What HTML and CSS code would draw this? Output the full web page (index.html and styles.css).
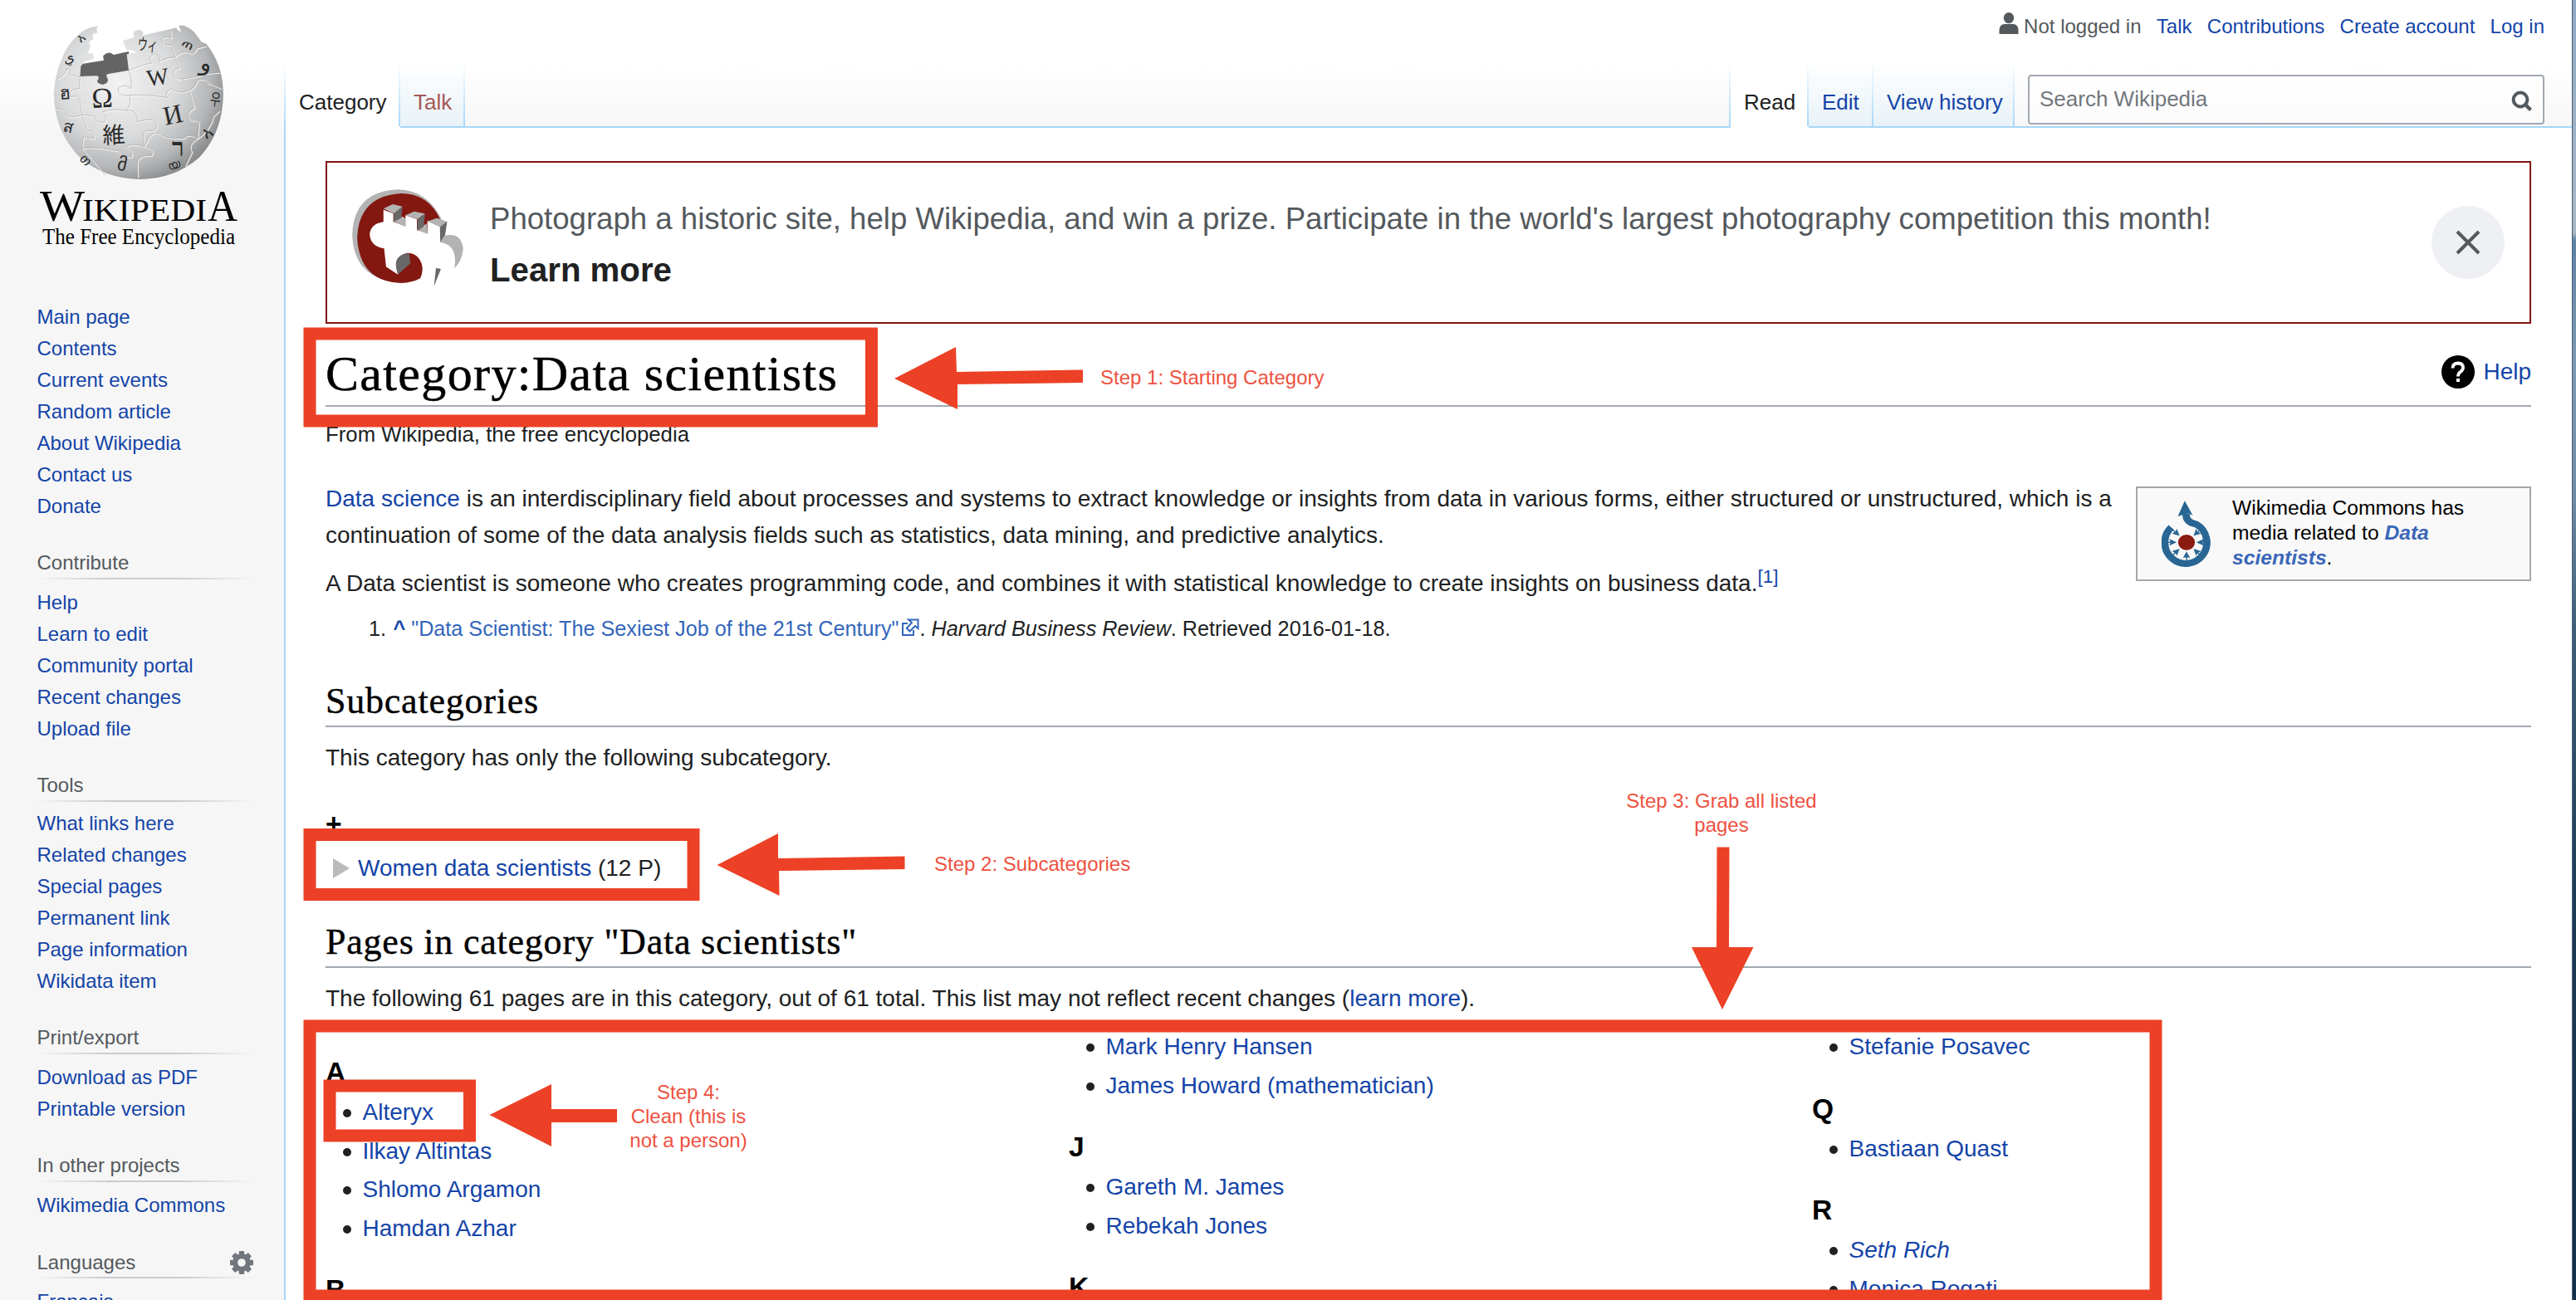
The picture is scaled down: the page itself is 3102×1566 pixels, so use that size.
FILE: index.html
```html
<!DOCTYPE html>
<html lang="en">
<head>
<meta charset="utf-8">
<title>Category:Data scientists - Wikipedia</title>
<link rel="stylesheet" href="styles.css">
</head>
<body>
<div class="page">
  <aside class="sidebar">
    <svg class="logo" width="342" height="320" viewBox="0 0 342 320">
      <defs>
        <radialGradient id="globe" cx="0.38" cy="0.38" r="0.68">
          <stop offset="0" stop-color="#f2f2f2"/><stop offset="0.5" stop-color="#dadbdc"/><stop offset="0.8" stop-color="#b5b6b8"/><stop offset="1" stop-color="#858688"/>
        </radialGradient>
      </defs>
      <g transform="scale(0.3954 0.3333)">
        <path fill="#646464" d="M246 232 L316 218 L314 202 Q330 182 346 198 L392 186 L398 262 L330 280 Q338 306 313 306 Q286 300 300 278 L240 276Z"/>
        <path fill="url(#globe)" d="M301 95 L293 104 L297 118 L282 124 L284 142 L270 152 L276 166 L268 192 L284 194 L286 212 L258 222 L246 240 L244 276 L296 274 Q306 282 294 294 Q300 306 313 306 Q332 300 328 284 Q318 268 334 266 L392 254 L386 196 L414 190 Q408 178 386 182 L374 148 L410 134 Q398 112 422 108 Q442 112 434 128 L538 100 Q536 110 552 114 L544 94 Q556 88 570 98 Q590 108 600 130 L614 152 L628 158 Q680 234 680 342 Q678 480 606 570 Q530 648 424 648 Q316 644 244 570 Q166 476 164 342 Q166 270 190 208 Q204 160 246 118 Q268 96 301 95Z"/>
        <g fill="none" stroke="#f8f8f8" stroke-width="3" transform="translate(2 3)">
          <path id="seams" d="M176 284 Q200 270 204 248 Q218 250 214 270 L244 278 L242 320 Q206 320 216 350 Q244 340 244 366 L250 414 M168 392 Q196 392 200 416 Q220 430 250 414 L290 420 Q292 446 318 442 Q330 420 312 404 Q350 390 386 400 Q400 380 396 344 Q356 352 360 320 Q378 300 400 320 Q402 280 392 256 M392 254 Q440 232 462 228 Q446 204 470 196 Q496 204 484 222 Q510 208 532 206 L524 162 Q492 170 494 140 Q506 128 522 138 L518 108 M532 206 Q556 180 576 190 Q590 200 600 174 L628 166 M532 206 L546 246 Q524 250 528 276 Q546 290 556 284 L576 326 M576 326 Q546 342 520 320 Q498 340 512 354 Q450 340 396 344 M576 326 Q600 312 600 290 Q626 280 634 300 L674 320 M556 284 Q600 280 626 266 L668 262 M576 326 L592 390 Q560 410 584 436 Q600 430 606 444 L602 500 M602 500 Q570 480 560 500 Q510 500 494 490 Q474 470 456 492 L440 530 M386 400 Q416 392 420 440 Q450 428 470 436 Q486 460 466 474 Q440 466 436 486 L440 530 Q400 514 384 532 Q410 548 400 568 Q370 566 360 546 L330 540 Q300 530 250 536 M250 414 L266 470 Q290 476 286 500 Q260 500 254 494 L250 536 L320 632 M440 530 Q474 540 462 562 Q420 560 418 590 L420 640 M602 500 Q640 470 650 420 L668 400 M602 500 Q570 520 584 550 L564 600"/>
        </g>
        <use href="#seams" fill="none" stroke="#a4a4a4" stroke-width="1.600"/>
      </g>
      <g class="globe-glyphs">
        <text x="111" y="130" font-size="34" transform="rotate(-3 111 130)">Ω</text>
        <text x="178" y="104" font-size="28" transform="rotate(-8 178 104)">W</text>
        <text x="199" y="151" font-size="32" transform="rotate(-12 199 151)">И</text>
        <text x="124" y="173" font-size="27" transform="rotate(-3 124 173)">維</text>
        <text x="165" y="60" font-size="20" transform="rotate(6 165 60)" textLength="24" lengthAdjust="spacingAndGlyphs">ウィ</text>
        <text x="240" y="84" font-size="28" transform="rotate(12 240 84)">و</text>
        <text x="207" y="188" font-size="30" font-weight="bold">ר</text>
        <text x="252" y="126" font-size="20" transform="rotate(8 252 126)" textLength="13" lengthAdjust="spacingAndGlyphs">우</text>
        <text x="218" y="54" font-size="17" transform="rotate(30 218 54)">ጠ</text>
        <text x="78" y="77" font-size="17" transform="rotate(-20 78 77)">ي</text>
        <text x="97" y="52" font-size="15" transform="rotate(-35 97 52)">አ</text>
        <text x="72" y="120" font-size="22" transform="rotate(-4 72 120)">ฮ</text>
        <text x="75" y="158" font-size="20" transform="rotate(12 75 158)">ส</text>
        <text x="248" y="168" font-size="20" transform="rotate(-30 248 168)">አ</text>
        <text x="140" y="204" font-size="22" transform="rotate(12 140 204)">მ</text>
        <text x="95" y="192" font-size="16" transform="rotate(45 95 192)">თ</text>
        <text x="204" y="206" font-size="15" transform="rotate(-20 204 206)">യ</text>
      </g>
      <g class="wordmark">
        <text x="48" y="266" font-size="53" textLength="54" lengthAdjust="spacingAndGlyphs">W</text>
        <text x="99" y="266" font-size="37" textLength="150" lengthAdjust="spacingAndGlyphs">IKIPEDI</text>
        <text x="250" y="266" font-size="53" textLength="36" lengthAdjust="spacingAndGlyphs">A</text>
        <text x="51" y="294" font-size="27" textLength="232" lengthAdjust="spacingAndGlyphs">The Free Encyclopedia</text>
      </g>
    </svg>
    <nav class="portal portal-first">
      <a>Main page</a><a>Contents</a><a>Current events</a><a>Random article</a><a>About Wikipedia</a><a>Contact us</a><a>Donate</a>
    </nav>
    <nav class="portal">
      <h3>Contribute</h3>
      <a>Help</a><a>Learn to edit</a><a>Community portal</a><a>Recent changes</a><a>Upload file</a>
    </nav>
    <nav class="portal portal-tools">
      <h3>Tools</h3>
      <a>What links here</a><a>Related changes</a><a>Special pages</a><a>Permanent link</a><a>Page information</a><a>Wikidata item</a>
    </nav>
    <nav class="portal">
      <h3>Print/export</h3>
      <a>Download as PDF</a><a>Printable version</a>
    </nav>
    <nav class="portal">
      <h3>In other projects</h3>
      <a>Wikimedia Commons</a>
    </nav>
    <nav class="portal portal-lang">
      <h3>Languages
        <svg class="gear" width="28" height="28" viewBox="-14 -14 28 28">
          <g fill="#72777d"><rect id="tooth" x="-3.200" y="-14" width="6.400" height="28" rx="1"/><use href="#tooth" transform="rotate(45)"/><use href="#tooth" transform="rotate(90)"/><use href="#tooth" transform="rotate(135)"/><circle r="10.800"/></g>
          <circle r="4.800" fill="#f6f6f6"/>
        </svg>
      </h3>
      <a>Français</a>
    </nav>
  </aside>

  <div class="main">
    <header>
      <div class="personal">
        <svg width="24" height="26" viewBox="0 0 24 26"><g fill="#54595d"><ellipse cx="12" cy="6.600" rx="6.200" ry="6.600"/><path d="M0.500 26V21Q1 14 7 14H17Q23 14 23.500 21V26Z"/></g></svg>
        <span class="anon">Not logged in</span><a>Talk</a><a>Contributions</a><a>Create account</a><a>Log in</a>
      </div>
      <div class="tabs">
        <span class="tab selected t-category">Category</span>
        <span class="tab new t-talk">Talk</span>
        <span class="tab-fill"></span>
        <span class="tab selected t-read">Read</span>
        <span class="tab t-edit">Edit</span>
        <span class="tab t-history">View history</span>
        <div class="search-wrap">
          <div class="search"><span>Search Wikipedia</span>
            <svg width="26" height="26" viewBox="0 0 26 26" fill="none" stroke="#54595d"><circle cx="11" cy="11" r="8.400" stroke-width="4"/><path d="M16.500 16.500L23.500 23.500" stroke-width="4.400"/></svg>
          </div>
        </div>
      </div>
    </header>

    <main class="content">
      <section class="banner">
        <svg class="wlm" width="136" height="118" viewBox="1070 682 344 354" preserveAspectRatio="none">
          <path fill="#b3b3b3" d="M1345 790Q1300 684 1212 683Q1075 690 1073 850Q1078 985 1180 1012Z"/>
          <path fill="#831811" d="M1344 800Q1310 698 1222 697Q1092 706 1088 859Q1096 1016 1222 1021Q1256 1020 1280 1004Q1292 980 1284 950Q1272 912 1242 912L1300 860Z"/>
          <path fill="#fff" d="M1168 756L1198 770V800L1235 815V776L1270 790V828L1302 842V796L1340 816V872Q1388 880 1390 940Q1384 976 1360 1000L1345 972L1320 1036L1282 1004Q1290 980 1286 950Q1276 912 1242 912Q1208 918 1208 960L1212 990L1176 962L1170 896Q1128 888 1126 844Q1130 806 1168 800Z"/>
          <path fill="#b3b3b3" d="M1168 752L1196 736L1226 744L1200 770Z M1235 776L1262 762L1295 770L1272 790Z M1302 798L1330 786L1362 798L1340 818Z M1198 798L1226 780L1235 788V818Z M1270 826L1300 806L1302 844Z M1352 850Q1404 834 1411 896Q1408 942 1384 968Q1396 884 1342 874Z"/>
          <path fill="#686868" d="M1200 770L1226 744L1222 786L1199 800Z M1272 790L1295 770L1290 818L1271 832Z M1340 818L1362 798L1356 846L1341 874Z M1212 990Q1190 918 1246 914L1250 950Z M1328 966L1343 970L1322 1032Z"/>
        </svg>
        <div class="banner-text"><p>Photograph a historic site, help Wikipedia, and win a prize. Participate in the world's largest photography competition this month!</p><strong>Learn more</strong></div>
        <div class="close"><svg width="32" height="32" viewBox="0 0 32 32"><path d="M3 3L29 29M29 3L3 29" stroke="#54595d" stroke-width="4"/></svg></div>
      </section>

      <div class="title-row">
        <h1>Category:Data scientists</h1>
        <a class="help"><svg width="40" height="40" viewBox="0 0 40 40"><circle cx="20" cy="20" r="20"/><path d="M13.500 15.500Q13.500 9.500 20 9.500Q26 9.800 26 15Q26 17.800 22.500 20.200Q20 22 20 25.500" fill="none" stroke="#fff" stroke-width="3.800"/><rect x="18" y="28" width="4" height="4" fill="#fff"/></svg>Help</a>
      </div>
      <div class="site-sub">From Wikipedia, the free encyclopedia</div>

      <div class="intro">
        <div class="intro-text">
          <p><a>Data science</a> is an interdisciplinary field about processes and systems to extract knowledge or insights from data in various forms, either structured or unstructured, which is a<br>continuation of some of the data analysis fields such as statistics, data mining, and predictive analytics.</p>
          <p>A Data scientist is someone who creates programming code, and combines it with statistical knowledge to create insights on business data.<sup><a>[1]</a></sup></p>
          <div class="reflist"><span class="num">1.</span><span><b><a>^</a></b> <a class="ext">"Data Scientist: The Sexiest Job of the 21st Century"<svg width="22" height="22" viewBox="0 0 22 22" fill="none" stroke="#3366bb" stroke-width="2"><path d="M8 6H2V20H15V14"/><path d="M9 1.500H20.500V12L17 9L10.500 15.500L6.800 11.800L13 5Z"/></svg></a>. <i>Harvard Business Review</i>. Retrieved 2016-01-18.</span></div>
        </div>
        <div class="commons">
          <svg width="60" height="80" viewBox="174 606 166 240" preserveAspectRatio="none">
            <path d="M206 703A70 76 0 1 0 290 692Q252 684 256 652" fill="none" stroke="#296694" stroke-width="24"/>
            <path fill="#296694" d="M251 607L278 660Q262 652 262 652L228 663Z"/>
            <circle cx="257" cy="757" r="28" fill="#8b1a10"/>
            <g fill="#296694"><path id="p" d="M257 790L269 814L259 811V830H255V811L245 814Z"/><use href="#p" transform="rotate(45 257 757)"/><use href="#p" transform="rotate(90 257 757)"/><use href="#p" transform="rotate(135 257 757)"/><use href="#p" transform="rotate(-45 257 757)"/><use href="#p" transform="rotate(-90 257 757)"/><use href="#p" transform="rotate(-135 257 757)"/></g>
          </svg>
          <div>Wikimedia Commons has<br>media related to <a>Data<br>scientists</a>.</div>
        </div>
      </div>

      <h2 class="h-sub">Subcategories</h2>
      <p>This category has only the following subcategory.</p>
      <h3 class="plus">+</h3>
      <div class="subcat"><span class="caret"></span><span><a>Women data scientists</a> (12 P)</span></div>

      <h2 class="h-pages">Pages in category "Data scientists"</h2>
      <p>The following 61 pages are in this category, out of 61 total. This list may not reflect recent changes (<a>learn more</a>).</p>

      <div class="columns">
        <div class="col">
          <h3>A</h3>
          <ul><li><a>Alteryx</a></li><li><a>Ilkay Altintas</a></li><li><a>Shlomo Argamon</a></li><li><a>Hamdan Azhar</a></li></ul>
          <h3>B</h3>
        </div>
        <div class="col">
          <ul><li><a>Mark Henry Hansen</a></li><li><a>James Howard (mathematician)</a></li></ul>
          <h3>J</h3>
          <ul><li><a>Gareth M. James</a></li><li><a>Rebekah Jones</a></li></ul>
          <h3>K</h3>
        </div>
        <div class="col">
          <ul><li><a>Stefanie Posavec</a></li></ul>
          <h3>Q</h3>
          <ul><li><a>Bastiaan Quast</a></li></ul>
          <h3>R</h3>
          <ul><li><a><i>Seth Rich</i></a></li><li><a>Monica Rogati</a></li></ul>
        </div>
      </div>
    </main>
  </div>
  <div class="desktop"></div>

  <svg class="annotations" width="3102" height="1566" viewBox="0 0 3102 1566">
    <g fill="none" stroke="#ec4126" stroke-width="15">
      <rect x="373" y="402" width="676.500" height="105"/>
      <rect x="373" y="1005.500" width="462" height="72"/>
      <rect x="373" y="1236" width="2223" height="325"/>
      <rect x="397" y="1308" width="168.500" height="60"/>
    </g>
    <g fill="#ec4126">
      <path d="M1077 456L1151 418L1152 448L1304 445.500V461L1153 463V493Z"/>
      <path d="M863.500 1042L937 1004V1034L1089.500 1031.500V1047L938 1049L938.500 1079Z"/>
      <path d="M589.500 1343L664 1306V1336H743V1352H664V1381Z"/>
      <path d="M2074 1216L2037 1141H2067L2067.500 1020.500H2082.500L2082 1141H2111.500Z"/>
    </g>
    <g class="notes">
      <text x="1325" y="463">Step 1: Starting Category</text>
      <text x="1125" y="1049">Step 2: Subcategories</text>
      <g text-anchor="middle">
        <text x="2073" y="973">Step 3: Grab all listed</text><text x="2073" y="1002">pages</text>
        <text x="829" y="1324">Step 4:</text><text x="829" y="1353">Clean (this is</text><text x="829" y="1382">not a person)</text>
      </g>
    </g>
  </svg>
</div>
</body>
</html>
```
FILE: styles.css
```css
* { box-sizing: border-box; }
body { margin: 0; background: #fff; color: #202122; font: 28px/44px "Liberation Sans", Arial, sans-serif; }
p, h1, h2, h3, ul { margin: 0; padding: 0; }
a { color: #1444a8; }

.page { position: relative; display: flex; width: 3102px; height: 1566px; overflow: hidden; }

.sidebar {
  flex: none; width: 344px; height: 1566px; overflow: hidden;
  background:
    linear-gradient(#fff 75px, #a7d7f9 160px) right / 2px 100% no-repeat,
    linear-gradient(#fff 80px, #f6f6f6 160px);
}
.logo { display: block; height: 320px; }
.globe-glyphs { fill: #2a2a2a; font-family: "Liberation Serif", "Noto Sans CJK JP", serif; }
.wordmark { fill: #000; font-family: "Liberation Serif", serif; }
.portal { padding-left: 44.5px; font-size: 24px; line-height: 38px; }
.portal-first { margin-top: 43px; }
.portal a { display: block; }
.portal h3 {
  width: 260px; height: 39px; margin: 30px 0 9px;
  color: #54595d; font-size: 24px; font-weight: normal; line-height: 38px;
  background: linear-gradient(to right, rgba(200,204,209,0), #c8ccd1 33%, #c8ccd1 66%, rgba(200,204,209,0)) bottom / 100% 2px no-repeat;
}
.portal-tools h3 { margin-bottom: 7px; }
.portal-lang h3 { display: flex; justify-content: space-between; align-items: center; }

.main { flex: 1; display: flex; flex-direction: column; min-width: 0; }
header { flex: none; height: 154px; background: linear-gradient(#fff 80px, #f6f6f6 160px); }
.personal { display: flex; justify-content: flex-end; align-items: flex-start; height: 74px; padding: 15px 33px 0 0; font-size: 24px; line-height: 34px; }
.personal svg { margin-right: 6px; }
.personal a { margin-left: 18.3px; }
.anon { color: #54595d; }
.tabs { display: flex; height: 80px; }
.tab, .tab-fill, .search-wrap { border-bottom: 2px solid #a7d7f9; }
.tab, .tab-fill { flex: none; padding-left: 16px; font-size: 26px; line-height: 98px; white-space: nowrap; }
.tab { color: #1444a8; background: linear-gradient(#fff, #a7d7f9) right / 2px 100% no-repeat, linear-gradient(#fff, #e8f2f8); }
.tab-fill { flex: 1; background: linear-gradient(#fff, #a7d7f9) right / 2px 100% no-repeat; }
.tab.selected { color: #202122; background: linear-gradient(#fff, #a7d7f9) right / 2px 100% no-repeat, #fff; border-bottom-color: #fff; }
.tab.new { color: #a55858; }
.t-category { width: 138px; }
.t-talk { width: 78px; }
.t-read { width: 94px; }
.t-edit { width: 78px; }
.t-history { width: 170px; }
.search-wrap { width: 671px; padding: 16px 32px 0 16px; }
.search { display: flex; justify-content: space-between; align-items: center; width: 622px; height: 60px; padding: 0 12px; border: 2px solid #a2a9b1; border-radius: 4px; background: rgba(255,255,255,.5); color: #72777d; font-size: 26px; line-height: 54px; }
.search span { height: 56px; }
.search svg { margin-top: 4px; }

.content { flex: 1; padding: 40px 49px 0 48px; background: #fff; }
.banner { display: flex; height: 196px; border: 2px solid #80170f; }
.wlm { margin: 32px 0 0 29px; }
.banner-text { flex: 1; margin: 45px 0 0 31px; color: #54595d; font-size: 36.6px; line-height: 46px; white-space: nowrap; }
.banner-text strong { display: block; margin-top: 16px; color: #202122; font-size: 40.2px; }
.close { display: flex; align-items: center; justify-content: center; width: 88px; height: 88px; margin: 52px 30px 0 0; border-radius: 50%; background: #eff0f4; }

.title-row { display: flex; justify-content: space-between; height: 100px; border-bottom: 2px solid #a2a9b1; }
h1 { padding-top: 24px; color: #000; font: 60px/72px "Liberation Serif", Georgia, serif; letter-spacing: 1.35px; -webkit-text-stroke: .5px #000; }
.help { display: flex; align-items: center; gap: 10px; height: 40px; margin-top: 38px; line-height: 46px; }
.site-sub { padding-top: 15px; font-size: 25.76px; line-height: 36px; }

.intro { display: flex; justify-content: space-between; height: 199px; margin-top: 37px; }
.intro-text { padding-top: 1px; white-space: nowrap; }
.intro-text p + p { margin-top: 14px; }
sup { font-size: 22.4px; line-height: 0; vertical-align: 10px; }
.reflist { display: flex; margin-top: 13px; padding-left: 52px; font-size: 25.2px; line-height: 39px; }
.num { width: 29.5px; }
.ext { color: #3366bb; }
.ext svg { margin-left: 3px; vertical-align: -1px; }
.commons { display: flex; width: 476px; height: 114px; margin-top: 8px; border: 2px solid #a7a7a7; background: #f9f9f9; color: #000; font-size: 24.64px; line-height: 30px; }
.commons svg { flex: none; margin: 15px 25px 0 29px; }
.commons div { padding-top: 9px; }
.commons a { color: #3a66b8; font-weight: bold; font-style: italic; }

h2 { border-bottom: 2px solid #a2a9b1; color: #000; font: 44px/58px "Liberation Serif", Georgia, serif; letter-spacing: .78px; -webkit-text-stroke: .4px #000; }
h2 + p { padding-top: 1px; margin: 14px 0 -1px; }
.h-sub { margin-top: 39px; }
.plus, .col h3 { color: #000; font-size: 33.6px; font-weight: bold; }
.plus { padding-top: 2px; margin: 35px 0 -2px; }
.subcat { display: flex; align-items: center; height: 44px; margin-top: 11px; line-height: 46px; }
.caret { width: 0; height: 0; margin: 0 10px 0 9px; border: 12px solid transparent; border-left: 20px solid #bababa; border-right: 0; }
.h-pages { margin-top: 38px; }

.columns { display: grid; grid-template-columns: 895px 895px 1fr; margin-top: 14px; }
.col h3 { height: 46px; line-height: 46px; margin: 28px 0 2px; }
.col:first-child h3:first-child { margin-top: 31px; }
ul { list-style: none; }
li { display: flex; align-items: center; height: 46.5px; line-height: 46.5px; }
li::before { content: ""; width: 10px; height: 10px; margin: 2px 13.5px 0 21px; border-radius: 50%; background: #202122; }

.desktop { flex: none; width: 5px; border-left: 1px solid #4a6075; background: linear-gradient(#8fa9c4, #a9b8c6 280px, #5f83a4 290px, #7d9ab4 440px, #6f8ba5 600px, #3f5f7c 750px, #1c3a56 1100px, #14304a); }
.annotations { position: absolute; left: 0; top: 0; }
.notes { fill: #ee5140; font-size: 24px; }
```
